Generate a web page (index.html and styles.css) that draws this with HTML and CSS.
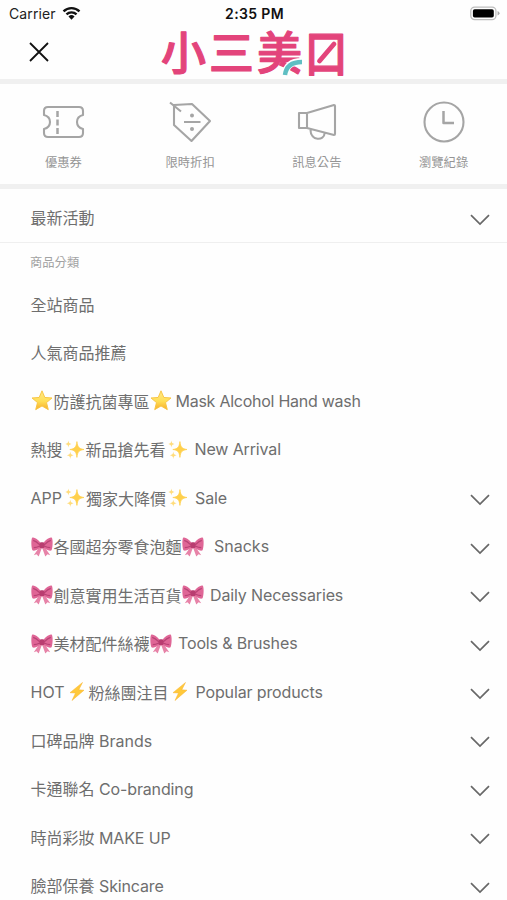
FILE: index.html
```html
<!DOCTYPE html>
<html lang="zh-Hant">
<head>
<meta charset="utf-8">
<title>小三美日</title>
<link rel="stylesheet" href="styles.css">
</head>
<body>
<svg class="defs" aria-hidden="true">
  <defs>
    <linearGradient id="gold" x1="0" y1="0" x2="0" y2="1"><stop offset="0" stop-color="#ffe88a"/><stop offset=".55" stop-color="#ffdf55"/><stop offset="1" stop-color="#f7ad2b"/></linearGradient>
    <symbol id="chevron" viewBox="0 0 20 12"><path d="M1 1.2L10 10l9-8.8" fill="none" stroke="#686868" stroke-width="1.7"/></symbol>
    <symbol id="star" viewBox="0 0 20 20"><path d="M10 .8l2.700 6.300 6.800.5-5.200 4.400 1.700 6.700L10 15.200l-6 3.500 1.700-6.700L.5 7.600l6.800-.5z" fill="url(#gold)" stroke="#f8c340" stroke-width=".9" stroke-linejoin="round"/></symbol>
    <symbol id="sparkles" viewBox="0 0 18 18"><path d="M11.300 1.500c.7 5.500 2 6.800 6.700 7.500-4.700.7-6 2-6.700 7.500-.7-5.500-2-6.800-6.700-7.500 4.700-.7 6-2 6.700-7.500z" fill="#ffd04c" stroke="#ffd04c" stroke-width=".7"/><path d="M3.200.5c.3 2.300.9 2.900 2.900 3.300-2 .4-2.600 1-2.900 3.300C2.900 4.800 2.300 4.200.3 3.800 2.300 3.400 2.900 2.800 3.200.5zM5 11c.3 2.500 1 3.100 3.200 3.500-2.200.4-2.900 1-3.200 3.500-.3-2.500-1-3.100-3.200-3.500C4 14.100 4.700 13.500 5 11z" fill="#ffdc7b"/></symbol>
    <symbol id="bow" viewBox="0 0 20 18"><path d="M8 9l-5.500 8 2.500-1 2 2L10 10l3 8 2-2 2.500 1L12 9z" fill="#e783a8"/><path d="M9 6C6 2 2.500 0 1 1 0 3 .1 9.500 1.300 12.500 3.500 13.500 7 11.500 9 9.500zM11 6c3-4 6.500-6 8-5 1 2 .9 8.500-.3 11.500-2.200 1-5.700-1-7.700-3z" fill="#df6696"/><path d="M2 3.500c2 .5 4 2 6 4M2.500 10C4.500 10 6 9.500 8 8.500M18 3.500c-2 .5-4 2-6 4m5.500 2.500C15.500 10 14 9.500 12 8.500" fill="none" stroke="#b94375" stroke-width="1.100"/><rect x="7.700" y="5.200" width="4.600" height="5.400" rx="1.500" fill="#b93d70"/></symbol>
    <symbol id="bolt" viewBox="0 0 16 20"><path d="M13.500 1L1 11.200l5.500.3L3 19 15 8.700l-5.200-.4z" fill="#ffc93b" stroke="#f9b32f" stroke-width=".5"/></symbol>
  </defs>
</svg>

<div class="statusbar">
  <div class="carrier"><span>Carrier</span>
    <svg class="wifi" viewBox="0 0 20 15"><path d="M1.600 5.300a12 12 0 0 1 16.800 0M4.700 8.500a7.600 7.600 0 0 1 10.600 0" fill="none" stroke="#111" stroke-width="2.500"/><path d="M6.800 10.700a4.600 4.600 0 0 1 6.400 0L10 14z" fill="#111"/></svg>
  </div>
  <div class="clock">2:35 PM</div>
  <div class="power"><svg class="battery" viewBox="0 0 31 15"><rect x=".8" y=".8" width="26" height="13" rx="4" fill="none" stroke="#bdbdbd" stroke-width="1.300"/><rect x="3" y="3" width="21.600" height="8.600" rx="1.800" fill="#000"/><path d="M28.500 5v4.500q2-.8 2-2.200T28.500 5z" fill="#aaa"/></svg></div>
</div>

<header class="topbar">
  <svg class="close" viewBox="0 0 20 20"><path d="M1 1l18 18M19 1L1 19" stroke="#111" stroke-width="1.800" fill="none"/></svg>
  <svg class="logo" viewBox="0 0 190 52">
    <g class="wordmark">
      <text x="0" y="43">小</text>
      <text x="48" y="43">三</text>
      <text x="96" y="43">美</text>
      <text transform="translate(143.500 45) scale(.96 1.120)">口</text>
    </g>
    <path d="M158.500 34L173 17" stroke="#e3447b" stroke-width="4.800" stroke-linecap="round"/>
    <path d="M124 48c1-9 6-13.500 17-13.500" fill="none" stroke="#fff" stroke-width="7"/>
    <path d="M124 48c1-8.500 6-13 17-13" fill="none" stroke="#5fbfc3" stroke-width="4.500"/>
  </svg>
</header>

<nav class="shortcuts">
  <a class="shortcut"><svg viewBox="0 0 44 44"><path d="M7 7h31q4 0 4 4v4c-8 2-8 12 0 14v4q0 4-4 4H7q-4 0-4-4v-4c8-2 8-12 0-14v-4q0-4 4-4z"/><path d="M16.500 11v6m0 2.500v6m0 2.500v6" stroke-width="2.500"/></svg><span>優惠券</span></a>
  <a class="shortcut"><svg viewBox="0 0 44 44"><path d="M6 5l18-1 18 17-18.500 20L6 25zM2 2.500l11 9M16 22h16.500"/><circle class="solid" cx="24" cy="15.500" r="2"/><circle class="solid" cx="24" cy="29" r="2"/></svg><span>限時折扣</span></a>
  <a class="shortcut"><svg viewBox="0 0 44 44"><path d="M4 13h8v15H4zM12 13l27-8q1 0 1 1v28q0 1-1 1l-27-7M15.500 30c0 11 14 11 14 3.500"/></svg><span>訊息公告</span></a>
  <a class="shortcut"><svg viewBox="0 0 44 44"><circle cx="22" cy="22" r="19.500"/><path d="M21.500 11v12H32" stroke-width="2.500"/></svg><span>瀏覽紀錄</span></a>
</nav>

<section class="events"><span>最新活動</span><svg class="chevron"><use href="#chevron"/></svg></section>

<h2 class="category-title">商品分類</h2>
<ul class="menu">
  <li><span>全站商品</span></li>
  <li><span>人氣商品推薦</span></li>
  <li><svg class="emoji wide"><use href="#star"/></svg><span>防護抗菌專區</span><svg class="emoji wide"><use href="#star"/></svg><span class="en mask">Mask Alcohol Hand wash</span></li>
  <li><span>熱搜</span><svg class="emoji spark"><use href="#sparkles"/></svg><span>新品搶先看</span><svg class="emoji spark"><use href="#sparkles"/></svg><span class="en after-spark">New Arrival</span></li>
  <li><span class="app">APP</span><svg class="emoji spark"><use href="#sparkles"/></svg><span>獨家大降價</span><svg class="emoji spark"><use href="#sparkles"/></svg><span class="en after-spark">Sale</span><svg class="chevron"><use href="#chevron"/></svg></li>
  <li><svg class="emoji wide"><use href="#bow"/></svg><span>各國超夯零食泡麵</span><svg class="emoji wide"><use href="#bow"/></svg><span class="snacks">Snacks</span><svg class="chevron"><use href="#chevron"/></svg></li>
  <li><svg class="emoji wide"><use href="#bow"/></svg><span>創意實用生活百貨</span><svg class="emoji wide"><use href="#bow"/></svg><span class="en after-bow">Daily Necessaries</span><svg class="chevron"><use href="#chevron"/></svg></li>
  <li><svg class="emoji wide"><use href="#bow"/></svg><span>美材配件絲襪</span><svg class="emoji wide"><use href="#bow"/></svg><span class="en after-bow">Tools &amp; Brushes</span><svg class="chevron"><use href="#chevron"/></svg></li>
  <li><span class="hot">HOT</span><svg class="emoji zap"><use href="#bolt"/></svg><span>粉絲團注目</span><svg class="emoji zap"><use href="#bolt"/></svg><span class="en after-zap">Popular products</span><svg class="chevron"><use href="#chevron"/></svg></li>
  <li><span>口碑品牌 Brands</span><svg class="chevron"><use href="#chevron"/></svg></li>
  <li><span>卡通聯名 <span class="en">Co-branding</span></span><svg class="chevron"><use href="#chevron"/></svg></li>
  <li><span>時尚彩妝 <span class="en">MAKE UP</span></span><svg class="chevron"><use href="#chevron"/></svg></li>
  <li><span>臉部保養 <span class="en">Skincare</span></span><svg class="chevron"><use href="#chevron"/></svg></li>
</ul>
</body>
</html>
```
FILE: styles.css
```css
* { box-sizing: border-box; }
body {
  margin: 0;
  height: 900px;
  overflow: hidden;
  background: #fefefe;
  color: #6e6e6e;
  font-family: Inter, "Noto Sans CJK TC", sans-serif;
  font-size: 16px;
}
svg { flex: none; }
.defs { display: block; width: 0; height: 0; }
.statusbar {
  display: grid;
  grid-template-columns: 1fr auto 1fr;
  align-items: center;
  height: 27px;
  padding: 0 7px 0 9px;
  color: #222;
  font-size: 14px;
}
.carrier { display: flex; align-items: center; gap: 6px; letter-spacing: .1px; }
.wifi { width: 19px; height: 15px; }
.clock { color: #111; font-weight: 600; letter-spacing: .35px; }
.power { display: flex; justify-content: flex-end; }
.battery { width: 30px; height: 15px; }
.topbar {
  display: flex;
  height: 57px;
  padding-left: 29px;
  border-bottom: 5px solid #f0f0f0;
}
.close { width: 20px; height: 20px; margin-top: 15px; }
.logo { width: 190px; height: 52px; margin-left: 112px; overflow: visible; }
.wordmark {
  fill: #e3447b;
  stroke: #e3447b;
  stroke-width: 1.2;
  stroke-linejoin: round;
  font: 500 45px "Noto Sans CJK TC", sans-serif;
}
.shortcuts {
  display: grid;
  grid-template-columns: repeat(4, 1fr);
  height: 105px;
  padding-top: 16px;
  border-bottom: 5px solid #f0f0f0;
}
.shortcut {
  display: flex;
  flex-direction: column;
  align-items: center;
  color: #959595;
  font-size: 12.3px;
  line-height: 18px;
}
.shortcut svg {
  width: 44px;
  height: 44px;
  margin-bottom: 10px;
  fill: none;
  stroke: #a5a5a5;
  stroke-width: 2.1;
  stroke-linejoin: round;
}
.shortcut .solid { fill: #a5a5a5; stroke: none; }
.events {
  display: flex;
  align-items: center;
  height: 54px;
  padding: 3px 17px 0 30.5px;
  border-bottom: 1px solid #efefef;
}
.chevron { width: 20px; height: 12px; margin: 5px 0 0 auto; }
.category-title {
  height: 36.700px;
  margin: 0;
  padding: 11px 0 0 30px;
  color: #a2a2a2;
  font-size: 12.300px;
  font-weight: 400;
  line-height: 18px;
}
.menu { margin: 0; padding: 0; list-style: none; }
.menu li {
  display: flex;
  align-items: center;
  height: 48.460px;
  padding: 0 17px 0 30.5px;
  white-space: nowrap;
}
.en { letter-spacing: -.14px; }
.emoji { height: 21px; }
.emoji.wide { width: 22px; margin: 0 .5px; }
.emoji.spark { width: 19px; margin: 0 2px; }
.emoji.zap { width: 16px; margin: 0 3.5px; }
.mask { margin-left: 3px; letter-spacing: -.26px; }
.after-spark { margin-left: 6px; }
.app { margin-right: 1px; }
.snacks { margin-left: 9.5px; }
.after-bow { margin-left: 5.500px; }
.hot { margin-right: 1px; }
.after-zap { margin-left: 4px; }
```
